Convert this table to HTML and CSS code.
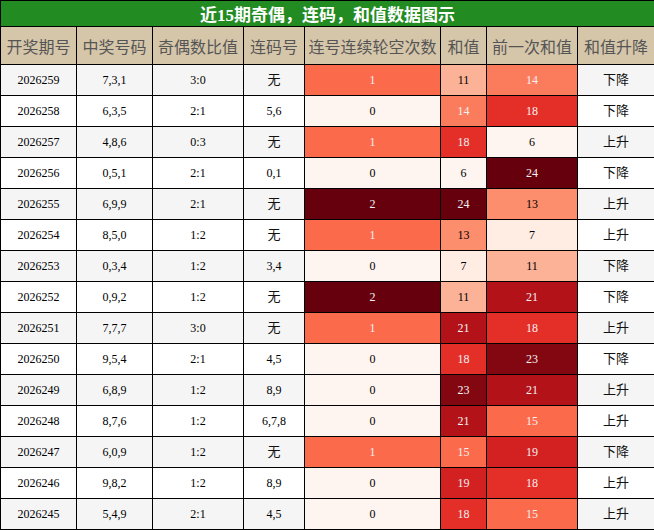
FILE: index.html
```html
<!DOCTYPE html>
<html lang="zh-CN">
<head>
<meta charset="utf-8">
<title>近15期奇偶，连码，和值数据图示</title>
<link rel="stylesheet" href="styles.css">
</head>
<body>
<table class="grid">
  <colgroup>
    <col class="c1"><col class="c2"><col class="c3"><col class="c4"><col class="c5"><col class="c6"><col class="c7"><col class="c8">
  </colgroup>
  <thead>
    <tr class="title-row"><th colspan="8" class="title">近15期奇偶，连码，和值数据图示</th></tr>
    <tr class="head-row">
      <th>开奖期号</th><th>中奖号码</th><th>奇偶数比值</th><th>连码号</th><th>连号连续轮空次数</th><th>和值</th><th>前一次和值</th><th>和值升降</th>
    </tr>
  </thead>
  <tbody>
    <tr class="odd"><td>2026259</td><td>7,3,1</td><td>3:0</td><td class="cjk">无</td><td class="g1">1</td><td class="h11">11</td><td class="h14">14</td><td class="cjk">下降</td></tr>
    <tr class="even"><td>2026258</td><td>6,3,5</td><td>2:1</td><td>5,6</td><td class="g0">0</td><td class="h14">14</td><td class="h18">18</td><td class="cjk">下降</td></tr>
    <tr class="odd"><td>2026257</td><td>4,8,6</td><td>0:3</td><td class="cjk">无</td><td class="g1">1</td><td class="h18">18</td><td class="h6">6</td><td class="cjk">上升</td></tr>
    <tr class="even"><td>2026256</td><td>0,5,1</td><td>2:1</td><td>0,1</td><td class="g0">0</td><td class="h6">6</td><td class="h24">24</td><td class="cjk">下降</td></tr>
    <tr class="odd"><td>2026255</td><td>6,9,9</td><td>2:1</td><td class="cjk">无</td><td class="g2">2</td><td class="h24">24</td><td class="h13">13</td><td class="cjk">上升</td></tr>
    <tr class="even"><td>2026254</td><td>8,5,0</td><td>1:2</td><td class="cjk">无</td><td class="g1">1</td><td class="h13">13</td><td class="h7">7</td><td class="cjk">上升</td></tr>
    <tr class="odd"><td>2026253</td><td>0,3,4</td><td>1:2</td><td>3,4</td><td class="g0">0</td><td class="h7">7</td><td class="h11">11</td><td class="cjk">下降</td></tr>
    <tr class="even"><td>2026252</td><td>0,9,2</td><td>1:2</td><td class="cjk">无</td><td class="g2">2</td><td class="h11">11</td><td class="h21">21</td><td class="cjk">下降</td></tr>
    <tr class="odd"><td>2026251</td><td>7,7,7</td><td>3:0</td><td class="cjk">无</td><td class="g1">1</td><td class="h21">21</td><td class="h18">18</td><td class="cjk">上升</td></tr>
    <tr class="even"><td>2026250</td><td>9,5,4</td><td>2:1</td><td>4,5</td><td class="g0">0</td><td class="h18">18</td><td class="h23">23</td><td class="cjk">下降</td></tr>
    <tr class="odd"><td>2026249</td><td>6,8,9</td><td>1:2</td><td>8,9</td><td class="g0">0</td><td class="h23">23</td><td class="h21">21</td><td class="cjk">上升</td></tr>
    <tr class="even"><td>2026248</td><td>8,7,6</td><td>1:2</td><td>6,7,8</td><td class="g0">0</td><td class="h21">21</td><td class="h15">15</td><td class="cjk">上升</td></tr>
    <tr class="odd"><td>2026247</td><td>6,0,9</td><td>1:2</td><td class="cjk">无</td><td class="g1">1</td><td class="h15">15</td><td class="h19">19</td><td class="cjk">下降</td></tr>
    <tr class="even"><td>2026246</td><td>9,8,2</td><td>1:2</td><td>8,9</td><td class="g0">0</td><td class="h19">19</td><td class="h18">18</td><td class="cjk">上升</td></tr>
    <tr class="odd"><td>2026245</td><td>5,4,9</td><td>2:1</td><td>4,5</td><td class="g0">0</td><td class="h18">18</td><td class="h15">15</td><td class="cjk">上升</td></tr>
  </tbody>
</table>
</body>
</html>
```
FILE: styles.css
```css
html, body {
  margin: 0;
  padding: 0;
  background: #ffffff;
}

.grid {
  border-collapse: collapse;
  table-layout: fixed;
  width: 654px;
  font-family: "Liberation Serif", "Noto Sans CJK SC", serif;
  font-size: 12px;
  color: #000;
}

.c1 { width: 76px; }
.c2 { width: 76px; }
.c3 { width: 91px; }
.c4 { width: 61px; }
.c5 { width: 136px; }
.c6 { width: 46px; }
.c7 { width: 91px; }
.c8 { width: 77px; }

.grid th,
.grid td {
  border: 1px solid #000;
  padding: 0;
  text-align: center;
  vertical-align: middle;
  overflow: hidden;
  white-space: nowrap;
}

.title-row th {
  height: 25px;
}

.title {
  background: #228b22;
  color: #ffffff;
  font-family: "Liberation Serif", "Noto Sans CJK SC", serif;
  font-weight: bold;
  font-size: 17px;
}

.head-row th {
  height: 37px;
  background: #d5c6aa;
  color: #555555;
  font-family: "Noto Sans CJK SC", sans-serif;
  font-weight: normal;
  font-size: 16px;
}

.grid tbody td {
  height: 30px;
}

.odd { background: #f5f5f5; }
.even { background: #ffffff; }

.grid tbody td.cjk {
  font-family: "Noto Sans CJK SC", sans-serif;
  font-size: 13px;
  color: #111;
  line-height: 1;
  padding-bottom: 3px;
  height: 27px;
}

/* consecutive-miss gradient */
.g0 { background: #fff5f0; color: #000; }
.g1 { background: #fb6a4a; color: #f1f1f1; }
.g2 { background: #67000d; color: #f1f1f1; }

/* sum gradient (range 6..24) */
.h6  { background: #fff5f0; color: #000; }
.h7  { background: #ffece3; color: #000; }
.h11 { background: #fcb297; color: #000; }
.h13 { background: #fc8e6e; color: #000; }
.h14 { background: #fb7c5c; color: #f1f1f1; }
.h15 { background: #fb6a4a; color: #f1f1f1; }
.h18 { background: #e32f27; color: #f1f1f1; }
.h19 { background: #d32020; color: #f1f1f1; }
.h21 { background: #b21218; color: #f1f1f1; }
.h23 { background: #820711; color: #f1f1f1; }
.h24 { background: #67000d; color: #f1f1f1; }
```
